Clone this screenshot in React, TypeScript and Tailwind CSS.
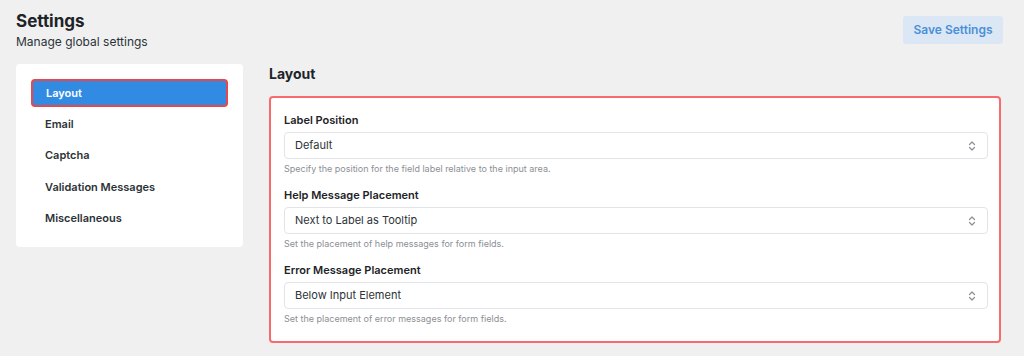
import React, { useState } from 'react';

const menu = ['Layout', 'Email', 'Captcha', 'Validation Messages', 'Miscellaneous'];

const fields = [
  {
    label: 'Label Position',
    value: 'Default',
    help: 'Specify the position for the field label relative to the input area.',
  },
  {
    label: 'Help Message Placement',
    value: 'Next to Label as Tooltip',
    help: 'Set the placement of help messages for form fields.',
  },
  {
    label: 'Error Message Placement',
    value: 'Below Input Element',
    help: 'Set the placement of error messages for form fields.',
  },
];

const UpDown: React.FC = () => (
  <svg width="8" height="12" viewBox="0 0 8 12" fill="none" stroke="#8c8f94" strokeWidth="1.2" strokeLinecap="round" strokeLinejoin="round">
    <path d="M1.5 4.5 4 2l2.5 2.5" />
    <path d="M1.5 7.5 4 10l2.5-2.5" />
  </svg>
);

const App: React.FC = () => {
  const [active, setActive] = useState('Layout');

  return (
    <div className="min-h-[356px] bg-[#f0f0f1] text-[#1d2327] font-['Inter','Liberation_Sans',sans-serif]">
      <div className="flex justify-between pl-4 pr-[21px] pt-[9px]">
        <div>
          <h1 className="text-[17px] leading-[24px] font-bold">Settings</h1>
          <p className="text-[12px] leading-[16px] mt-px text-[#2c3338]">Manage global settings</p>
        </div>
        <button className="mt-[7px] h-[28px] w-[100px] rounded-[3px] bg-[#dbe7f4] text-[#4a90d9] text-[12px] font-semibold">
          Save Settings
        </button>
      </div>

      <div className="flex gap-[26px] pl-4 pr-[23px] mt-[14px]">
        <div className="w-[227px] shrink-0 self-start bg-white rounded-[4px] p-[15px] flex flex-col gap-[3.25px]">
          {menu.map((m) =>
            m === active ? (
              <button
                key={m}
                onClick={() => setActive(m)}
                className="h-[28px] text-left px-[13px] rounded-[4px] bg-[#318be3] border-2 border-[#e5484d] text-white text-[11px] font-semibold"
              >
                {m}
              </button>
            ) : (
              <button
                key={m}
                onClick={() => setActive(m)}
                className="h-[28px] text-left px-[14px] text-[#2c3338] text-[11px] font-semibold"
              >
                {m}
              </button>
            )
          )}
        </div>

        <div className="flex-1 pt-[2px]">
          <h2 className="text-[14px] leading-[16px] font-bold">Layout</h2>
          <div className="mt-[14px] bg-white border-2 border-[#f86a6e] rounded-[4px] pl-[13px] pr-[11px] pt-[15px] pb-[16px] flex flex-col gap-[13px]">
            {fields.map((f) => (
              <div key={f.label}>
                <label className="block text-[11px] leading-[14px] font-semibold text-[#1d2327]">{f.label}</label>
                <div className="mt-[5px] h-[27px] flex items-center justify-between pl-[10px] pr-[11px] border border-[#e2e4e7] rounded-[4px] bg-white text-[11px] text-[#2c3338]">
                  <span>{f.value}</span>
                  <UpDown />
                </div>
                <p className="mt-[4px] text-[9px] leading-[12px] text-[#8c8f94]">{f.help}</p>
              </div>
            ))}
          </div>
        </div>
      </div>
    </div>
  );
};

export default App;
